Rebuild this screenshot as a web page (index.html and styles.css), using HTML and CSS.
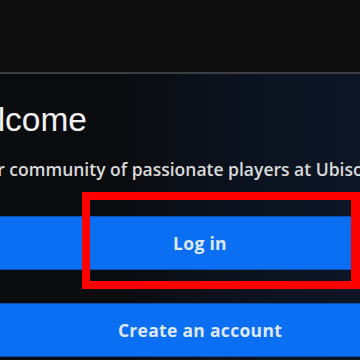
FILE: index.html
```html
<!DOCTYPE html>
<html lang="en">
<head>
<meta charset="utf-8">
<link rel="stylesheet" href="styles.css">
</head>
<body>
<div class="backdrop"></div>
<div class="modal">
  <div class="content">
    <h1 class="title">Welcome</h1>
    <p class="subtitle">Join our community of passionate players at Ubisoft</p>
    <div class="actions">
      <button class="btn">Log in</button>
      <button class="btn">Create an account</button>
    </div>
  </div>
  <div class="highlight"></div>
</div>
</body>
</html>
```
FILE: styles.css
```css
html, body {
  margin: 0;
  padding: 0;
  width: 360px;
  height: 360px;
  overflow: hidden;
  background: #0e0e0f;
}
.backdrop {
  height: 72px;
  background: #0e0e0f;
}
.modal {
  position: relative;
  height: 288px;
  border-top: 2px solid #3b3e43;
  background: linear-gradient(90deg, #0b0c0f 0%, #0b0c10 35%, #0c1320 70%, #0e1626 100%);
  overflow: hidden;
}
.content {
  margin-left: -61px;
  width: 522px;
  display: flex;
  flex-direction: column;
}
.title {
  margin: 26px 0 0 0;
  padding-left: 9px;
  font-family: "Liberation Sans", Arial, sans-serif;
  font-weight: 400;
  font-size: 33.5px;
  line-height: 40px;
  color: #f2f2f2;
  white-space: nowrap;
}
.subtitle {
  margin: 17px 0 0 0;
  font-family: "Open Sans", sans-serif;
  font-weight: 600;
  font-size: 17.5px;
  line-height: 24px;
  color: #dadada;
  white-space: nowrap;
}
.actions {
  margin-top: 35px;
  display: flex;
  flex-direction: column;
  gap: 33px;
}
.btn {
  height: 54px;
  border: 0;
  border-top: 1px solid #0a4fae;
  border-bottom: 1px solid #0a4fae;
  background: #0b6ff3;
  color: #dfe8f6;
  font-family: "Open Sans", sans-serif;
  font-weight: 700;
  font-size: 17.5px;
  letter-spacing: 0.3px;
  padding: 0;
}
.highlight {
  position: absolute;
  left: 82px;
  top: 118px;
  width: 261px;
  height: 81px;
  border: 8px solid #ff0000;
  border-right-width: 9px;
}
```
